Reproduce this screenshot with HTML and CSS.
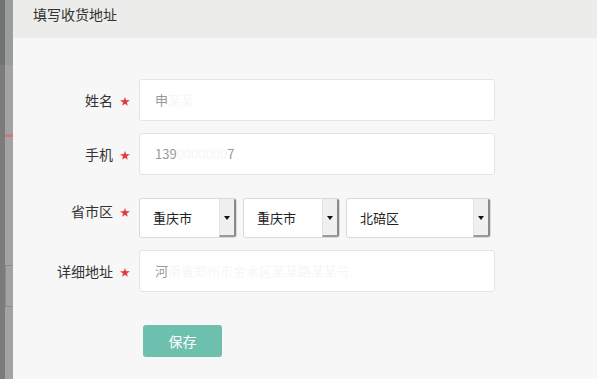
FILE: index.html
```html
<!DOCTYPE html>
<html lang="zh-CN">
  <head>
    <meta charset="UTF-8" />
    <meta name="viewport" content="width=device-width, initial-scale=1.0" />
    <title>填写收货地址</title>
    <link rel="stylesheet" href="styles.css">
  </head>
  <body>
    <div class="page">
      <div class="side">
        <div class="side-dark"></div>
        <div class="side-light">
          <div class="mark"></div>
          <div class="box"></div>
        </div>
      </div>
      <div class="panel">
        <div class="head">填写收货地址</div>
        <form class="form">
          <div class="row">
            <label class="label">姓名</label>
            <span class="req">★</span>
            <div class="input">申<span class="blur">某某</span></div>
          </div>
          <div class="row">
            <label class="label">手机</label>
            <span class="req">★</span>
            <div class="input">139<span class="blur">0000000</span>7</div>
          </div>
          <div class="row row-sel">
            <label class="label">省市区</label>
            <span class="req">★</span>
            <div class="sels">
              <div class="sel sel-a"><span>重庆市</span><span class="arrow"></span></div>
              <div class="sel sel-b"><span>重庆市</span><span class="arrow"></span></div>
              <div class="sel sel-c"><span>北碚区</span><span class="arrow"></span></div>
            </div>
          </div>
          <div class="row">
            <label class="label">详细地址</label>
            <span class="req">★</span>
            <div class="input">河<span class="blur">南省郑州市金水区某某路某某号</span></div>
          </div>
          <div class="actions">
            <button type="button" class="btn">保存</button>
          </div>
        </form>
      </div>
    </div>
  </body>
</html>
```

FILE: styles.css
```css
html, body {
  margin: 0;
  height: 100%;
}
body {
  font-family: "Noto Sans CJK SC", "Liberation Sans", sans-serif;
  color: #333;
  background: #f7f7f7;
}
.page {
  display: flex;
  height: 379px;
  overflow: hidden;
}
.side {
  display: flex;
  width: 13px;
  flex: 0 0 13px;
}
.side-dark {
  width: 5px;
  background: linear-gradient(#6f7472 0, #6f7472 65px, #7b7b7b 65px);
}
.side-light {
  width: 8px;
  background: linear-gradient(#9b9d9c 0, #9b9d9c 65px, #a3a3a3 65px);
  padding-top: 134px;
  box-sizing: border-box;
}
.mark {
  height: 3px;
  background: #c97a7c;
}
.box {
  margin-top: 128px;
  height: 40px;
  border: 1px solid #8c8c8c;
  border-right: none;
}
.panel {
  flex: 1;
  background: #f7f7f7;
}
.head {
  height: 38px;
  box-sizing: border-box;
  padding: 4px 0 0 20px;
  line-height: 20px;
  font-size: 14px;
  background: #ececea;
  color: #333;
}
.form {
  padding-top: 41px;
}
.row {
  display: flex;
  align-items: flex-start;
  margin-bottom: 12px;
}
.label {
  width: 100px;
  height: 42px;
  text-align: right;
  font-size: 14px;
  line-height: 42px;
  color: #333;
}
.req {
  width: 26px;
  height: 42px;
  padding-left: 7px;
  box-sizing: border-box;
  font-size: 10px;
  line-height: 44px;
  color: #e3393c;
}
.input {
  width: 356px;
  height: 42px;
  box-sizing: border-box;
  border: 1px solid #e4e4e2;
  border-radius: 3px;
  background: #fff;
  padding-left: 15px;
  font-size: 13px;
  line-height: 40px;
  color: #999;
}
.blur {
  color: #f6f6f6;
}
.row-sel .label,
.row-sel .req {
  margin-top: 3px;
}
.sels {
  display: flex;
  gap: 6px;
  margin-top: 11px;
}
.sel {
  display: flex;
  justify-content: space-between;
  height: 40px;
  box-sizing: border-box;
  border: 1px solid #d9d9d9;
  border-radius: 3px;
  background: #fff;
  padding-left: 13px;
  font-size: 13px;
  line-height: 38px;
  color: #222;
  overflow: hidden;
}
.sel-a { width: 98px; }
.sel-b { width: 97px; }
.sel-c { width: 145px; }
.arrow {
  position: relative;
  width: 14px;
  background: #f0f0f0;
  border-right: 2px solid #8a8a8a;
  border-bottom: 2px solid #9a9a9a;
  border-left: 1px solid #e2e2e2;
}
.arrow::after {
  content: "";
  position: absolute;
  left: 4px;
  top: 17px;
  border-left: 3px solid transparent;
  border-right: 3px solid transparent;
  border-top: 4px solid #111;
}
.actions {
  padding: 21px 0 0 130px;
}
.btn {
  width: 79px;
  height: 32px;
  border: none;
  border-radius: 3px;
  background: #6dbfae;
  color: #fff;
  font-family: inherit;
  font-size: 14px;
}
```
